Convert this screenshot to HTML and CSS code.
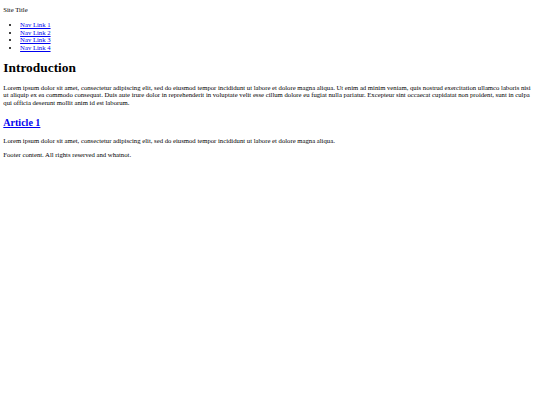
FILE: index.html
```html
<!DOCTYPE html>
<html>
<head>
<meta charset="utf-8">
<title>Site</title>
<link rel="stylesheet" href="styles.css">
</head>
<body>
<header class="site-header">
<p class="site-title">Site Title</p>
<nav>
<ul class="nav-list">
<li><a href="#">Nav Link 1</a></li>
<li><a href="#">Nav Link 2</a></li>
<li><a href="#">Nav Link 3</a></li>
<li><a href="#">Nav Link 4</a></li>
</ul>
</nav>
</header>
<main>
<section class="intro">
<h1 class="intro-title">Introduction</h1>
<p class="intro-text">Lorem ipsum dolor sit amet, consectetur adipiscing elit, sed do eiusmod tempor incididunt ut labore et dolore magna aliqua. Ut enim ad minim veniam, quis nostrud exercitation ullamco laboris nisi ut aliquip ex ea commodo consequat. Duis aute irure dolor in reprehenderit in voluptate velit esse cillum dolore eu fugiat nulla pariatur. Excepteur sint occaecat cupidatat non proident, sunt in culpa qui officia deserunt mollit anim id est laborum.</p>
</section>
<article class="article">
<h2 class="article-title"><a href="#">Article 1</a></h2>
<p class="article-text">Lorem ipsum dolor sit amet, consectetur adipiscing elit, sed do eiusmod tempor incididunt ut labore et dolore magna aliqua.</p>
</article>
</main>
<footer class="site-footer">
<p>Footer content. All rights reserved and whatnot.</p>
</footer>
</body>
</html>
```
FILE: styles.css
```css
html {
  background: #ffffff;
}
body {
  margin: 6px 3.3px 3.3px;
  font-family: "Liberation Serif", "Times New Roman", serif;
  font-size: 6.7px;
  line-height: 7.45px;
  color: #000000;
}
p {
  margin: 6.7px 0;
}
.site-title {
  margin: 0 0 7.7px;
}
.nav-list {
  margin: 7.7px 0 6.7px;
  padding-left: 16.8px;
}
a {
  color: #0000ee;
}
.intro-title {
  font-size: 13.4px;
  line-height: 15px;
  margin: 9px 0 9px;
}
.intro-text {
  margin-top: 9px;
}
.article-title {
  font-size: 10.05px;
  line-height: 11.5px;
  margin: 10.4px 0 9px;
}
.article-text {
  margin-top: 9px;
}
.site-footer p {
  margin-top: 6.2px;
}
```
